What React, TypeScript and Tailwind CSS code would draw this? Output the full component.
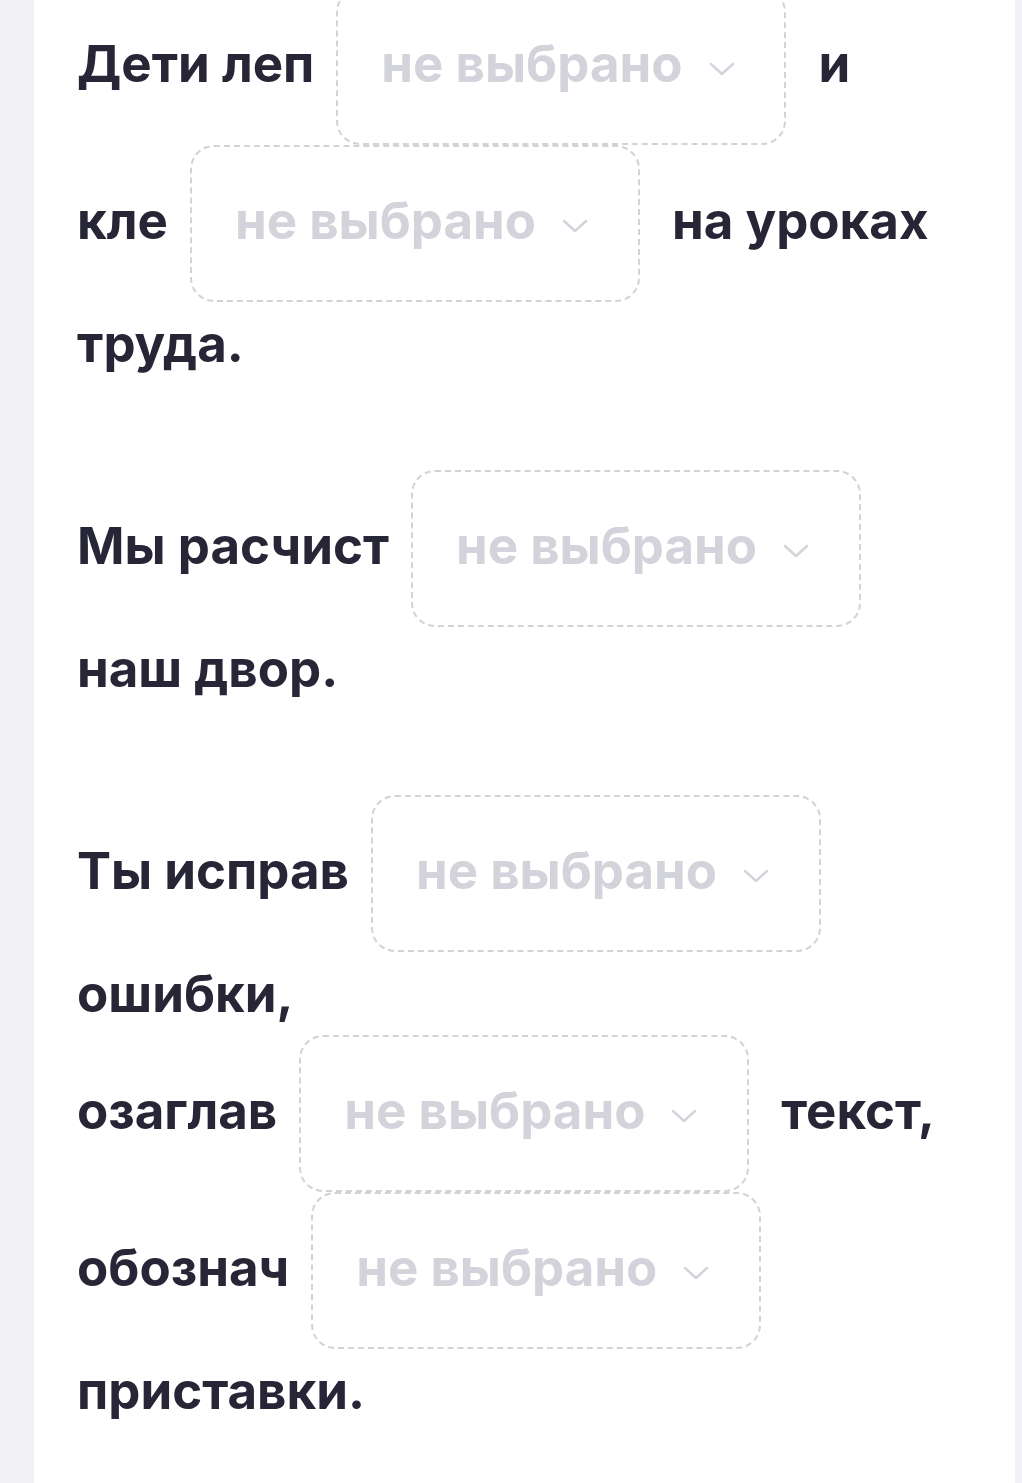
type Part = { word: string; gap?: boolean }

// each sentence: plain text runs and word stems glued to a dropdown
const sentences: (string | Part)[][] = [
  [{ word: "Дети леп", gap: true }, " и ", { word: "кле", gap: true }, " на уроках труда."],
  [{ word: "Мы расчист", gap: true }, " наш двор."],
  [{ word: "Ты исправ", gap: true }, " ошибки, ", { word: "озаглав", gap: true }, " текст, ", { word: "обознач", gap: true }, " приставки."],
]

function Chevron() {
  return (
    <svg width="26" height="14" viewBox="0 0 26 14" fill="none" className="inline-block ml-[26px] align-[6px]">
      <path d="M2 2l11 10L24 2" stroke="#d3d3db" strokeWidth="2.4" strokeLinecap="round" strokeLinejoin="round" />
    </svg>
  )
}

function Gap() {
  return (
    <span className="inline-block w-[450px] ml-[22px] mr-[20px] rounded-[24px] border-2 border-dashed border-[#d2d2d7] px-[43px] pt-[44px] pb-[49px] leading-[60px] text-[#d3d3db] whitespace-nowrap">
      не выбрано
      <Chevron />
    </span>
  )
}

export default function App() {
  return (
    <div className="min-h-screen bg-[#f2f2f6] font-['Inter','Noto_Sans',sans-serif]">
      <div className="ml-[34px] w-[981px] min-h-[1483px] bg-white px-[43px] overflow-hidden">
        <div className="-mt-[12px]">
          {sentences.map((parts, i) => (
            <p key={i} className="text-[51px] font-bold leading-[83px] text-[#262637] mb-[85px]">
              {parts.map((p, j) =>
                typeof p === "string" ? (
                  <span key={j}>{p}</span>
                ) : (
                  <span key={j} className="whitespace-nowrap">
                    {p.word}
                    {p.gap && <Gap />}
                  </span>
                )
              )}
            </p>
          ))}
        </div>
      </div>
    </div>
  )
}
